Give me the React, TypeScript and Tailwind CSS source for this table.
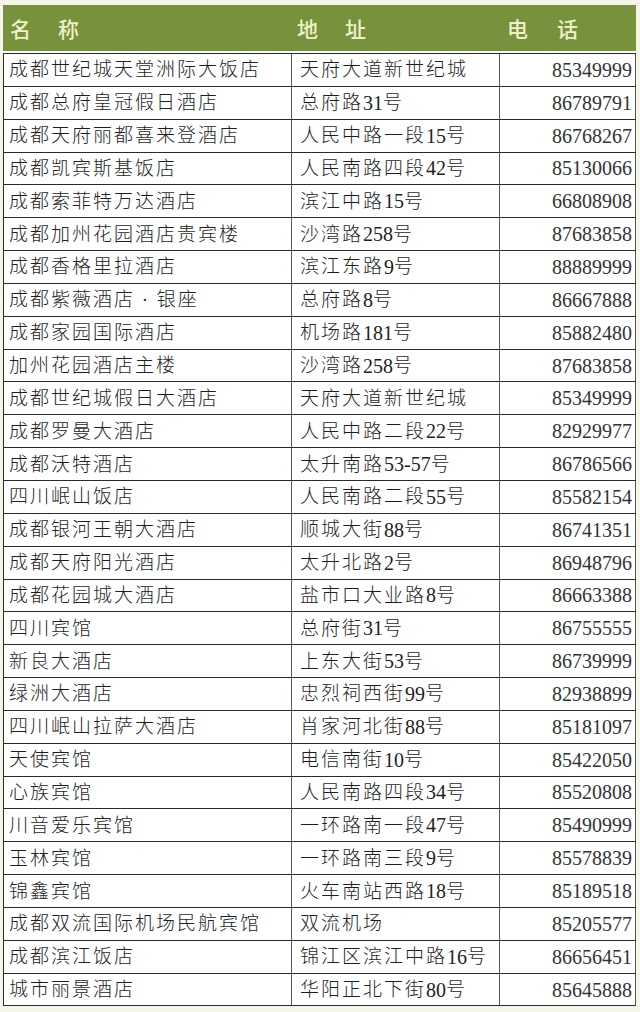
const rows: [string, string, string][] = [
  ["成都世纪城天堂洲际大饭店", "天府大道新世纪城", "85349999"],
  ["成都总府皇冠假日酒店", "总府路31号", "86789791"],
  ["成都天府丽都喜来登酒店", "人民中路一段15号", "86768267"],
  ["成都凯宾斯基饭店", "人民南路四段42号", "85130066"],
  ["成都索菲特万达酒店", "滨江中路15号", "66808908"],
  ["成都加州花园酒店贵宾楼", "沙湾路258号", "87683858"],
  ["成都香格里拉酒店", "滨江东路9号", "88889999"],
  ["成都紫薇酒店 · 银座", "总府路8号", "86667888"],
  ["成都家园国际酒店", "机场路181号", "85882480"],
  ["加州花园酒店主楼", "沙湾路258号", "87683858"],
  ["成都世纪城假日大酒店", "天府大道新世纪城", "85349999"],
  ["成都罗曼大酒店", "人民中路二段22号", "82929977"],
  ["成都沃特酒店", "太升南路53-57号", "86786566"],
  ["四川岷山饭店", "人民南路二段55号", "85582154"],
  ["成都银河王朝大酒店", "顺城大街88号", "86741351"],
  ["成都天府阳光酒店", "太升北路2号", "86948796"],
  ["成都花园城大酒店", "盐市口大业路8号", "86663388"],
  ["四川宾馆", "总府街31号", "86755555"],
  ["新良大酒店", "上东大街53号", "86739999"],
  ["绿洲大酒店", "忠烈祠西街99号", "82938899"],
  ["四川岷山拉萨大酒店", "肖家河北街88号", "85181097"],
  ["天使宾馆", "电信南街10号", "85422050"],
  ["心族宾馆", "人民南路四段34号", "85520808"],
  ["川音爱乐宾馆", "一环路南一段47号", "85490999"],
  ["玉林宾馆", "一环路南三段9号", "85578839"],
  ["锦鑫宾馆", "火车南站西路18号", "85189518"],
  ["成都双流国际机场民航宾馆", "双流机场", "85205577"],
  ["成都滨江饭店", "锦江区滨江中路16号", "86656451"],
  ["城市丽景酒店", "华阳正北下街80号", "85645888"],
];

// digits in the address are set tight, the Chinese text keeps its spacing
function Address({ text }: { text: string }) {
  const parts = text.split(/([0-9-]+)/).filter(Boolean);
  return (
    <>
      {parts.map((p, i) =>
        /^[0-9-]+$/.test(p) ? (
          <span key={i} className="text-[20px] tracking-normal">{p}</span>
        ) : (
          <span key={i} className="tracking-[2px]">{p}</span>
        )
      )}
    </>
  );
}

export default function App() {
  return (
    <div className="min-h-[1012px] w-[640px] bg-[#f6f5ea] pl-[3px] pt-[5px] font-['Liberation_Serif','Noto_Sans_CJK_SC',serif]">
      <div className="w-[633px] bg-white">
        {/* header */}
        <div className="flex h-[46px] items-center bg-[#76923c] font-['Noto_Sans_CJK_SC',sans-serif] text-[21px] font-medium leading-none text-[#eef1c8]">
          <div className="flex w-[289px] gap-[27px] pl-[7px]">
            <span>名</span>
            <span>称</span>
          </div>
          <div className="flex w-[208px] gap-[27px] pl-[5px]">
            <span>地</span>
            <span>址</span>
          </div>
          <div className="flex gap-[29px] pl-[7px]">
            <span>电</span>
            <span>话</span>
          </div>
        </div>
        <div className="h-[2px] bg-white" />

        <div className="border-l border-t border-[#2a2a2a]">
          {rows.map(([name, addr, tel]) => (
            <div key={name} className="flex h-[32.85px] border-b border-[#2a2a2a] text-[19px] font-light leading-none text-[#1e1e1e]">
              <div className="flex w-[288px] items-center border-r border-[#555] pl-[5px] tracking-[2px]">{name}</div>
              <div className="flex w-[208px] items-center border-r border-[#555] pl-[8px]">
                <Address text={addr} />
              </div>
              <div className="flex w-[136px] items-center justify-end border-r border-[#555] pr-[3px] text-[20px] font-normal text-[#333]">{tel}</div>
            </div>
          ))}
        </div>
      </div>
    </div>
  );
}
